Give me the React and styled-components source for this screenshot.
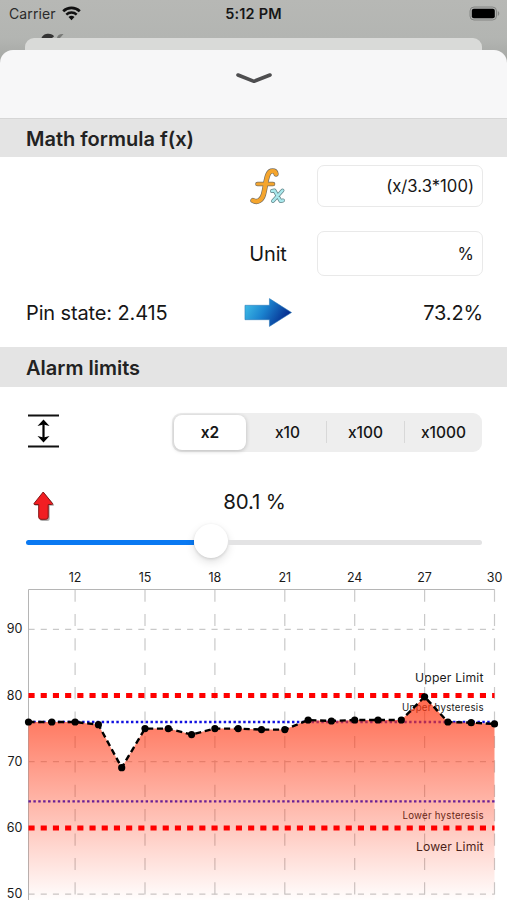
import React from "react";
import styled, { createGlobalStyle } from "styled-components";

const GlobalStyle = createGlobalStyle`
  * {
    box-sizing: border-box;
  }

  body {
    margin: 0;
    background: #fff;
    color: #161616;
    font-family: Inter, "Liberation Sans", sans-serif;
  }
`;

const Screen = styled.div`
  display: flex;
  flex-direction: column;
  width: 507px;
  height: 900px;
  overflow: hidden;
  background: linear-gradient(#b7b8b5, #b3b5b2 38px, #a2a4a1 66px, #fff 66px);
`;

const StatusBar = styled.div`
  display: grid;
  grid-template-columns: 1fr auto 1fr;
  align-items: center;
  height: 27px;
  padding: 0 7px 0 9px;
  font-size: 14px;
`;

const Carrier = styled.div`
  display: flex;
  align-items: center;
  gap: 6px;
  color: #2b2b2b;
  letter-spacing: 0.1px;
`;

const Clock = styled.div`
  margin-right: 2px;
  font-size: 14.5px;
  font-weight: 600;
  letter-spacing: 0.2px;
`;

const Battery = styled.svg`
  justify-self: end;
`;

const Backdrop = styled.div`
  display: flex;
  height: 11px;
  padding-left: 40px;
`;

const BackCard = styled.div`
  height: 12px;
  margin: 0 25px;
  border-radius: 9px 9px 0 0;
  background: #d9dad8;
`;

const SheetHeader = styled.div`
  display: flex;
  justify-content: center;
  height: 69px;
  padding-top: 21px;
  border-bottom: 1px solid #d6d6d6;
  border-radius: 13px 13px 0 0;
  background: #f7f7f8;
`;

const SectionTitle = styled.h2`
  flex: none;
  height: ${(p) => p.$height}px;
  margin: 0;
  padding-left: 26px;
  background: #e4e4e4;
  color: #222;
  font-size: 20px;
  font-weight: 600;
  line-height: ${(p) => p.$height + 2}px;
`;

const Formula = styled.section`
  display: grid;
  flex: none;
  grid-template-columns: 218px 48px 1fr;
  grid-template-rows: 58px 77px 41px;
  align-items: center;
  padding: 0 24px 14px 26px;
`;

const CellIcon = styled.div`
  display: flex;
  justify-content: center;
`;

const Label = styled.div`
  grid-column: ${(p) => p.$column};
  font-size: ${(p) => p.$size || 20}px;
  letter-spacing: -0.13px;
  text-align: ${(p) => p.$align || "left"};
  white-space: nowrap;
`;

const Field = styled.input`
  grid-column: 3;
  width: 166px;
  height: ${(p) => p.$height}px;
  margin-left: auto;
  padding: 0 8px;
  border: 1px solid #e9e9e9;
  border-radius: 7px;
  background: #fff;
  color: #161616;
  font-family: inherit;
  font-size: 16.7px;
  font-feature-settings: "calt" 0;
  text-align: right;
`;

const ScaleRow = styled.div`
  display: flex;
  flex: none;
  align-items: center;
  justify-content: space-between;
  height: 90px;
  padding: 0 25px 0 27px;
`;

const Segments = styled.div`
  display: flex;
  width: 310px;
  height: 39px;
  padding: 2px 0 2px 2px;
  border-radius: 9px;
  background: #eee;
`;

const Segment = styled.button`
  flex: ${(p) => (p.$active ? "0 0 72px" : "1 1 0")};
  margin-right: ${(p) => (p.$active ? 3 : 0)}px;
  padding: 0;
  border: 0;
  border-radius: 8px;
  background: ${(p) => (p.$active ? "#fff" : "transparent")};
  box-shadow: ${(p) => (p.$active ? "0 1px 4px rgba(0, 0, 0, 0.22)" : "none")};
  color: #161616;
  font-family: inherit;
  font-size: 15.5px;
  font-weight: ${(p) => (p.$active ? 600 : 500)};
`;

const Divider = styled.span`
  align-self: center;
  width: 1px;
  height: 22px;
  background: #d8d8d8;
`;

const LimitRow = styled.div`
  display: grid;
  flex: none;
  grid-template-columns: 34px 1fr 34px;
  align-items: center;
  height: 48px;
  padding: 0 24px 0 26px;
`;

const Slider = styled.div`
  display: flex;
  flex: none;
  align-items: center;
  height: 35px;
  padding: 0 25px 0 26px;
`;

const Track = styled.div`
  flex: ${(p) => (p.$filled ? "0 0 168px" : 1)};
  height: 5px;
  border-radius: ${(p) => (p.$filled ? "3px 0 0 3px" : "0 3px 3px 0")};
  background: ${(p) => (p.$filled ? "#0a79f2" : "#e3e3e4")};
`;

const Thumb = styled.div`
  width: 34px;
  height: 34px;
  margin-bottom: 3px;
  border-radius: 50%;
  background: #fff;
  box-shadow: 0 4px 10px rgba(0, 0, 0, 0.12), 0 1px 3px rgba(0, 0, 0, 0.12);
`;

const ChartSvg = styled.svg`
  display: block;
  flex: none;

  text {
    fill: #1a1a1a;
  }
`;

const WifiIcon = () => (
  <svg width="19" height="15" viewBox="0 0 19 15" fill="none" stroke="#111">
    <path d="M1.2 5.3a12 12 0 0 1 16.6 0" strokeWidth="2.7" />
    <path d="M4.3 8.6a7.5 7.5 0 0 1 10.4 0" strokeWidth="2.4" />
    <path d="M9.5 14.2 6.5 11.1a4.3 4.3 0 0 1 6 0z" fill="#111" stroke="none" />
  </svg>
);

const BatteryIcon = () => (
  <Battery width="31" height="15" viewBox="0 0 31 15">
    <rect x="1" y="1" width="26.5" height="13" rx="4" fill="#b1b2b0" stroke="#858684" />
    <rect x="2.8" y="2.8" width="23" height="9.4" rx="2" />
    <path d="M28.8 5c2 1 2 4 0 5z" fill="#858684" />
  </Battery>
);

const GlimpseIcon = () => (
  <svg width="26" height="11" viewBox="0 0 26 11">
    <path d="M1.5 11c1.5-5.5 11-5.5 12.5-1.5l-2 1.5z" fill="#333" />
    <path d="M17 11c.5-3 3-4.5 6.5-4l-3.5 4z" fill="#777976" />
  </svg>
);

const ChevronIcon = () => (
  <svg width="36" height="14" viewBox="0 0 36 14">
    <path
      d="M2 4 18 10.3 34 4"
      fill="none"
      stroke="#4e4e50"
      strokeWidth="3.6"
      strokeLinecap="round"
      strokeLinejoin="round"
    />
  </svg>
);

const FxIcon = () => {
  const stem = "M26 6c-.5-4-6-4.500-8 .5-2.500 6-2.500 13-4.500 20-1.500 5.500-6 8.500-10.500 6";
  const cross = "M22 23l2.500-.5 6 10.500 2.500-.5M32.500 22.500l-9.500 10.500";
  return (
    <svg width="37" height="37" viewBox="0 0 37 37" fill="none" strokeLinecap="round" strokeLinejoin="round">
      <path d={stem} stroke="#777064" strokeWidth="5.4" />
      <path d="M7.5 16H23" stroke="#777064" strokeWidth="4.6" />
      <path d={stem} stroke="#f5a52d" strokeWidth="4" />
      <path d="M7.5 16H23" stroke="#f5a52d" strokeWidth="3.2" />
      <path d={cross} stroke="#64868a" strokeWidth="3.9" />
      <path d={cross} stroke="#a9e8ec" strokeWidth="2.5" />
    </svg>
  );
};

const BlueArrow = () => (
  <svg width="50" height="31" viewBox="0 0 50 31">
    <defs>
      <linearGradient id="blue" x1="0" y1="0" x2="1" y2="0.35">
        <stop offset="0" stopColor="#45c5ea" />
        <stop offset="0.5" stopColor="#1b83cf" />
        <stop offset="1" stopColor="#062f91" />
      </linearGradient>
    </defs>
    <path d="M1 8H26.5V1L49.5 15.5 26.5 30V23H1z" fill="url(#blue)" stroke="#2b79b8" strokeWidth="0.6" />
  </svg>
);

const RangeIcon = () => (
  <svg width="33" height="38" viewBox="0 0 33 38">
    <path d="M1 2.5H32M1 33.5H32" stroke="#111" strokeWidth="2.2" />
    <path d="M16.5 10V26" stroke="#000" strokeWidth="2.2" />
    <path d="M16.5 6.5l6 6.5-6-1.5-6 1.5zM16.5 29.5l6-6.5-6 1.5-6-1.5z" />
  </svg>
);

const RedArrow = () => (
  <svg width="34" height="44" viewBox="0 -10.5 34 44">
    <path
      d="M18.2 3.5 28 15q.5 1.2-1 1.2H23.7V29q0 2.5-2.5 2.5H16.2q-2.5 0-2.5-2.5V16.2H9.7q-1.5 0-1-1.2z"
      fill="#777"
      opacity="0.6"
    />
    <path
      d="M17.2 2.5 26.5 14q.5 1-1 1H22.2V27.5q0 2.3-2.3 2.3H15q-2.3 0-2.3-2.3V15H9q-1.5 0-1-1z"
      fill="#f21e22"
      stroke="#831414"
    />
  </svg>
);

const samples = [
  76, 76, 76, 75.6, 69.1, 75, 75, 74.1, 75, 75, 74.85, 74.85, 76.3, 76.15, 76.3,
  76.3, 76.3, 79.8, 76, 75.9, 75.7,
];

const LEFT = 28.5;
const RIGHT = 494.5;
const TOP = 29.5;
const xFor = (n) => LEFT + (n - 10) * 23.3;
const yFor = (value) => 69.3 + (90 - value) * 6.62;

const LimitLine = ({ value }) => (
  <path
    d={`M${LEFT} ${yFor(value)}H${RIGHT}`}
    stroke="#f00"
    strokeWidth="5"
    strokeDasharray="6.1"
  />
);

const Chart = () => {
  const points = samples.map((value, i) => [xFor(i + 10), yFor(value)]);
  const line = "M" + points.map((p) => p.join(" ")).join("L");

  return (
    <ChartSvg width="507" height="340" viewBox="0 0 507 340">
      <defs>
        <linearGradient id="area" gradientUnits="userSpaceOnUse" x1="0" y1="136" x2="0" y2="342">
          <stop offset="0" stopColor="#ff3814" stopOpacity="0.76" />
          <stop offset="1" stopColor="#ff3814" stopOpacity="0" />
        </linearGradient>
      </defs>

      {[12, 15, 18, 21, 24, 27, 30].map((n) => (
        <g key={n}>
          <path d={`M${xFor(n)} ${TOP}V334.5`} stroke="#c9c9c9" strokeWidth="1.2" strokeDasharray="12.2" />
          <text x={xFor(n)} y="21.5" fontSize="12.5" textAnchor="middle">
            {n}
          </text>
        </g>
      ))}
      {[90, 80, 70, 60, 50].map((n) => (
        <g key={n}>
          <path d={`M${LEFT} ${yFor(n)}H${RIGHT}`} stroke="#c9c9c9" strokeWidth="1.2" strokeDasharray="6.1" />
          <text x="22.3" y={yFor(n) + 4} fontSize="12.5" textAnchor="end">
            {n}
          </text>
        </g>
      ))}
      <path d={`M${LEFT} 340V${TOP}H${RIGHT}`} fill="none" stroke="#b5b5b5" />

      <LimitLine value={80} />
      {[76, 64].map((n) => (
        <path key={n} d={`M${LEFT} ${yFor(n)}H${RIGHT}`} stroke="#1010e0" strokeWidth="2.4" strokeDasharray="2.44" />
      ))}
      <text x="415" y="122" fontSize="12.2" textLength="68.5">Upper Limit</text>
      <text x="402" y="151" fontSize="9.7" textLength="81.5">Upper hysteresis</text>
      <text x="402.5" y="259" fontSize="9.7" textLength="81">Lower hysteresis</text>
      <text x="416" y="290.5" fontSize="12.2" textLength="67.5">Lower Limit</text>

      <path d={`${line}V340H${LEFT}Z`} fill="url(#area)" />
      <LimitLine value={60} />
      <path d={line} fill="none" stroke="#000" strokeWidth="2.4" strokeDasharray="6.1 3.7" />
      {points.map(([x, y]) => (
        <circle key={x} cx={x} cy={y} r="3.6" />
      ))}
    </ChartSvg>
  );
};

const App = () => (
  <>
    <GlobalStyle />
    <Screen>
      <StatusBar>
        <Carrier>
          Carrier <WifiIcon />
        </Carrier>
        <Clock>5:12 PM</Clock>
        <BatteryIcon />
      </StatusBar>
      <Backdrop>
        <GlimpseIcon />
      </Backdrop>
      <BackCard />
      <SheetHeader>
        <ChevronIcon />
      </SheetHeader>

      <SectionTitle $height={38}>Math formula f(x)</SectionTitle>
      <Formula>
        <span />
        <CellIcon>
          <FxIcon />
        </CellIcon>
        <Field $height={42} defaultValue="(x/3.3*100)" />
        <Label $column={2} $align="center">Unit</Label>
        <Field $height={45} defaultValue="%" />
        <Label $column={1}>Pin state: 2.415</Label>
        <CellIcon>
          <BlueArrow />
        </CellIcon>
        <Label $column={3} $align="right">73.2%</Label>
      </Formula>

      <SectionTitle $height={40}>Alarm limits</SectionTitle>
      <ScaleRow>
        <RangeIcon />
        <Segments>
          <Segment $active>x2</Segment>
          <Segment>x10</Segment>
          <Divider />
          <Segment>x100</Segment>
          <Divider />
          <Segment>x1000</Segment>
        </Segments>
      </ScaleRow>
      <LimitRow>
        <RedArrow />
        <Label $column={2} $align="center" $size={20.5}>80.1 %</Label>
      </LimitRow>
      <Slider>
        <Track $filled />
        <Thumb />
        <Track />
      </Slider>
      <Chart />
    </Screen>
  </>
);

export default App;
